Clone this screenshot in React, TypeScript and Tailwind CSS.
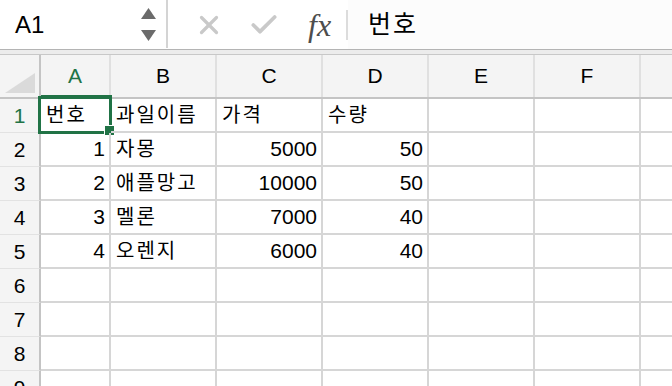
import { X, Check } from 'lucide-react'

const cols = ['A', 'B', 'C', 'D', 'E', 'F']
const widths = ['w-[70px]', 'w-[106px]', 'w-[106px]', 'w-[106px]', 'w-[106px]', 'w-[106px]']

type Cell = { v: string; num?: boolean }

const data: Cell[][] = [
  [{ v: '번호' }, { v: '과일이름' }, { v: '가격' }, { v: '수량' }],
  [{ v: '1', num: true }, { v: '자몽' }, { v: '5000', num: true }, { v: '50', num: true }],
  [{ v: '2', num: true }, { v: '애플망고' }, { v: '10000', num: true }, { v: '50', num: true }],
  [{ v: '3', num: true }, { v: '멜론' }, { v: '7000', num: true }, { v: '40', num: true }],
  [{ v: '4', num: true }, { v: '오렌지' }, { v: '6000', num: true }, { v: '40', num: true }],
]

const font = { fontFamily: '"Liberation Sans", "Noto Sans CJK KR", sans-serif' }

function FormulaBar() {
  return (
    <div className="flex h-[50px] items-center bg-white border-b border-[#b4b4b4]">
      <div className="flex w-[166px] h-full items-center pl-[15px] pr-[10px]">
        <span className="flex-1 text-[24px] text-black">A1</span>
        <div className="flex flex-col gap-[11px]">
          <svg width="15" height="11" viewBox="0 0 15 11">
            <polygon points="7.5,0 15,11 0,11" fill="#6b6b6b" />
          </svg>
          <svg width="15" height="11" viewBox="0 0 15 11">
            <polygon points="0,0 15,0 7.5,11" fill="#6b6b6b" />
          </svg>
        </div>
      </div>
      <div className="w-[2px] h-[48px] self-start bg-[#d4d4d4]" />
      <div className="flex items-center h-full pl-[26px]">
        <X className="w-[30px] h-[30px] text-[#c9c9c9]" strokeWidth={2.6} />
        <Check className="w-[32px] h-[32px] ml-[24px] text-[#c9c9c9]" strokeWidth={2.8} />
        <span
          className="ml-[28px] text-[32px] italic text-[#4d4d4d] leading-none"
          style={{ fontFamily: '"Liberation Serif", serif' }}
        >
          fx
        </span>
        <div className="ml-[15px] w-[2px] h-[30px] bg-[#dcdcdc]" />
      </div>
      <div className="flex-1 h-full flex items-center pl-[20px] bg-[#fcfcfc]">
        <span className="text-[25px] tracking-[2px] text-black">번호</span>
      </div>
    </div>
  )
}

function HeaderRow() {
  return (
    <div className="flex h-[44px] bg-[#f4f4f4] border-b-2 border-[#c4c4c4]">
      <div className="w-[41px] shrink-0 border-r-2 border-[#c4c4c4] flex items-end justify-center pb-[4px] pl-[1px]">
        <svg width="30" height="20" viewBox="0 0 30 20">
          <polygon points="30,0 30,20 0,20" fill="#dadada" />
        </svg>
      </div>
      {cols.map((c, i) => (
        <div
          key={c}
          className={`${widths[i]} shrink-0 relative flex items-center justify-center text-[21px] border-r-2 border-[#e0e0e0] ${
            i === 0 ? 'text-[#217346]' : 'text-black'
          }`}
        >
          {c}
          {i === 0 && <div className="absolute left-0 right-[-3px] bottom-[-1px] h-[3px] bg-[#217346]" />}
        </div>
      ))}
      <div className="flex-1" />
    </div>
  )
}

function Row({ n, cells }: { n: number; cells: Cell[] }) {
  return (
    <div className="flex h-[34px]">
      <div
        className={`w-[41px] shrink-0 bg-[#f4f4f4] border-r-2 border-b border-r-[#c4c4c4] border-b-[#e2e2e2] flex items-center justify-center text-[21px] ${
          n === 1 ? 'text-[#217346]' : 'text-black'
        }`}
      >
        {n}
      </div>
      {cols.map((c, i) => {
        const cell = cells[i]
        return (
          <div
            key={c}
            className={`${widths[i]} shrink-0 relative border-r-2 border-b-2 border-[#d6d6d6] flex items-center text-black whitespace-nowrap ${
              cell?.num ? 'justify-end pr-[4px] text-[21px]' : 'justify-start pl-[5px] text-[20px] tracking-[2px]'
            }`}
          >
            {cell?.v}
            {n === 1 && i === 0 && (
              <>
                <div className="absolute left-[-3px] top-[-3px] w-[74px] h-[38px] border-[3px] border-[#217346]" />
                <div className="absolute left-[63px] top-[26px] w-[11px] h-[11px] bg-[#217346] border border-white" />
              </>
            )}
          </div>
        )
      })}
      <div className="flex-1 border-b-2 border-[#d6d6d6]" />
    </div>
  )
}

export default function App() {
  const rows = [1, 2, 3, 4, 5, 6, 7, 8, 9]
  return (
    <div className="w-[672px] h-[386px] overflow-hidden bg-white" style={font}>
      <FormulaBar />
      <div className="h-[5px] bg-[#ececec] border-b border-[#c8c8c8]" />
      <HeaderRow />
      {rows.map((n) => (
        <Row key={n} n={n} cells={data[n - 1] ?? []} />
      ))}
    </div>
  )
}
